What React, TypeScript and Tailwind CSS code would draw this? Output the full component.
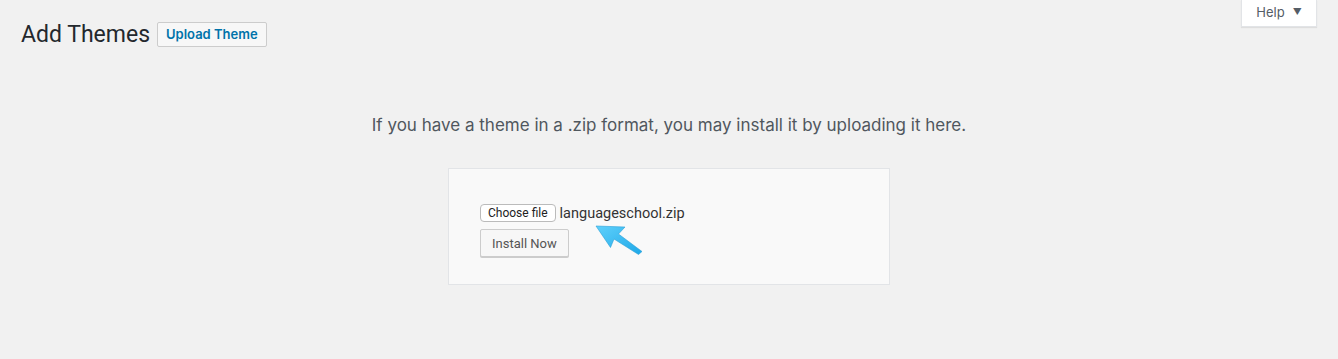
import React from 'react';

const inter = "font-['Inter','Noto_Sans',sans-serif]";
const roboto = "font-['Roboto','Noto_Sans',sans-serif]";

const Arrow: React.FC = () => (
  <svg width="50" height="34" viewBox="0 0 50 34" className="absolute left-[144px] top-[54px]">
    <defs>
      <linearGradient id="ag" x1="0" y1="0" x2="1" y2="1">
        <stop offset="0" stopColor="#5fd0fb" />
        <stop offset="1" stopColor="#1ea8e8" />
      </linearGradient>
    </defs>
    <path
      d="M3 3 L32 4 L25.5 11 L49 28.5 L45.5 31.5 L21 16 L17.5 24.5 Z"
      fill="url(#ag)"
      stroke="#2a9fd6"
      strokeWidth="0.6"
      strokeLinejoin="round"
    />
  </svg>
);

export default function App() {
  return (
    <div className={`w-[1338px] h-[359px] bg-[#f1f1f1] ${roboto} relative overflow-hidden`}>
      {/* help tab */}
      <div className={`absolute right-[21px] top-0 w-[76px] h-[27px] bg-white border border-t-0 border-[#e2e4e7] shadow-[0_1px_1px_rgba(0,0,0,0.08)] flex items-center justify-center gap-[8px] text-[13px] text-[#555d66] ${inter}`}>
        <span>Help</span>
        <span className="text-[9px] mt-[-2px]">▼</span>
      </div>

      <div className="pl-[21px] pt-[20px] flex items-center gap-[7px]">
        <h1 className="text-[23px] leading-[29px] text-[#23282d] font-normal">Add Themes</h1>
        <button className={`h-[25px] px-[8px] border border-[#ccc] rounded-[2px] bg-[#f7f7f7] text-[#0073aa] text-[13px] font-semibold leading-none ${inter}`}>
          Upload Theme
        </button>
      </div>

      <p className={`mt-[64px] text-center text-[17px] text-[#50575e] ${inter}`}>
        If you have a theme in a .zip format, you may install it by uploading it here.
      </p>

      <div className="mx-auto mt-[29px] w-[442px] h-[117px] bg-[#f9f9f9] border border-[#e2e4e7] relative">
        <div className="pt-[34px] pl-[31px] flex flex-col items-start gap-[5px]">
          <div className="flex items-center gap-[4px]">
            <span className="h-[18px] px-[7px] flex items-center rounded-[4px] border border-[#bbb] bg-white text-[12px] text-[#222]">
              Choose file
            </span>
            <span className="text-[14.5px] text-[#333]">languageschool.zip</span>
          </div>
          <button className="h-[28px] px-[11px] border border-[#ccc] rounded-[2px] bg-[#f7f7f7] shadow-[0_1px_0_#ccc] text-[13px] text-[#555]">
            Install Now
          </button>
        </div>
        <Arrow />
      </div>
    </div>
  );
}
